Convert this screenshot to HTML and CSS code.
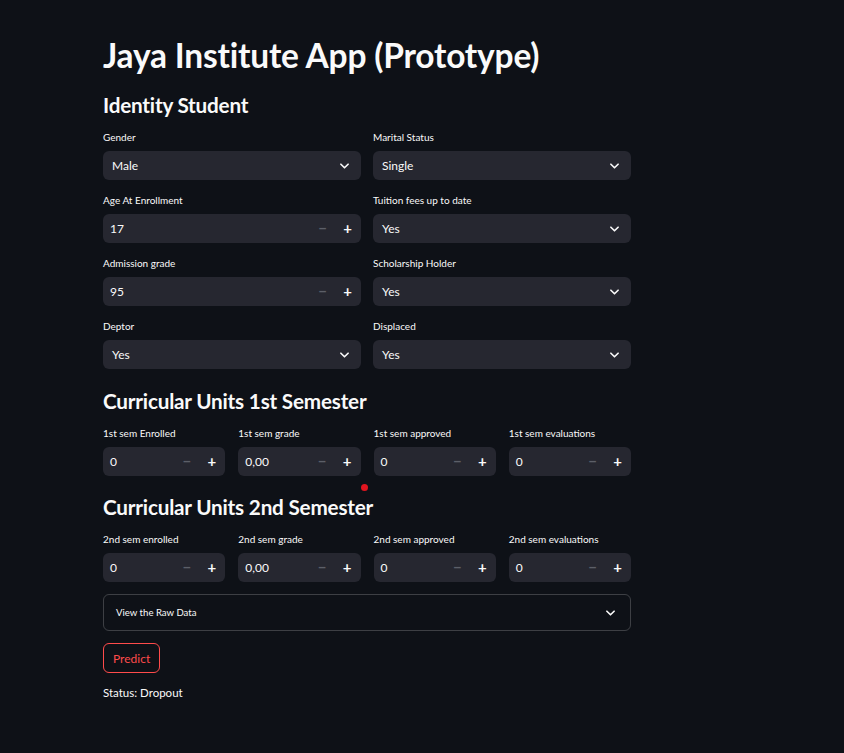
FILE: index.html
```html
<!DOCTYPE html>
<html lang="en">
<head>
<meta charset="utf-8">
<title>Jaya Institute App</title>
<link rel="stylesheet" href="styles.css">
</head>
<body>
<main class="main">
  <h1 class="title">Jaya Institute App (Prototype)</h1>
  <h3 class="subheader">Identity Student</h3>
  <div class="grid2">
    <div class="field"><label class="lbl">Gender</label><div class="select"><span>Male</span><svg class="chev" viewBox="0 0 10 6"><path d="M1 1l4 4 4-4" /></svg></div></div>
    <div class="field"><label class="lbl">Marital Status</label><div class="select"><span>Single</span><svg class="chev" viewBox="0 0 10 6"><path d="M1 1l4 4 4-4" /></svg></div></div>
    <div class="field"><label class="lbl">Age At Enrollment</label><div class="num"><span class="val">17</span><span class="minus">−</span><span class="plus">+</span></div></div>
    <div class="field"><label class="lbl">Tuition fees up to date</label><div class="select"><span>Yes</span><svg class="chev" viewBox="0 0 10 6"><path d="M1 1l4 4 4-4" /></svg></div></div>
    <div class="field"><label class="lbl">Admission grade</label><div class="num"><span class="val">95</span><span class="minus">−</span><span class="plus">+</span></div></div>
    <div class="field"><label class="lbl">Scholarship Holder</label><div class="select"><span>Yes</span><svg class="chev" viewBox="0 0 10 6"><path d="M1 1l4 4 4-4" /></svg></div></div>
    <div class="field"><label class="lbl">Deptor</label><div class="select"><span>Yes</span><svg class="chev" viewBox="0 0 10 6"><path d="M1 1l4 4 4-4" /></svg></div></div>
    <div class="field"><label class="lbl">Displaced</label><div class="select"><span>Yes</span><svg class="chev" viewBox="0 0 10 6"><path d="M1 1l4 4 4-4" /></svg></div></div>
  </div>

  <h3 class="subheader sec">Curricular Units 1st Semester</h3>
  <div class="grid4">
    <div class="field"><label class="lbl">1st sem Enrolled</label><div class="num"><span class="val">0</span><span class="minus">−</span><span class="plus">+</span></div></div>
    <div class="field"><label class="lbl">1st sem grade</label><div class="num"><span class="val">0,00</span><span class="minus">−</span><span class="plus">+</span></div></div>
    <div class="field"><label class="lbl">1st sem approved</label><div class="num"><span class="val">0</span><span class="minus">−</span><span class="plus">+</span></div></div>
    <div class="field"><label class="lbl">1st sem evaluations</label><div class="num"><span class="val">0</span><span class="minus">−</span><span class="plus">+</span></div></div>
  </div>

  <div class="sec2">
    <span class="dot"></span>
    <h3 class="subheader">Curricular Units 2nd Semester</h3>
  </div>
  <div class="grid4">
    <div class="field"><label class="lbl">2nd sem enrolled</label><div class="num"><span class="val">0</span><span class="minus">−</span><span class="plus">+</span></div></div>
    <div class="field"><label class="lbl">2nd sem grade</label><div class="num"><span class="val">0,00</span><span class="minus">−</span><span class="plus">+</span></div></div>
    <div class="field"><label class="lbl">2nd sem approved</label><div class="num"><span class="val">0</span><span class="minus">−</span><span class="plus">+</span></div></div>
    <div class="field"><label class="lbl">2nd sem evaluations</label><div class="num"><span class="val">0</span><span class="minus">−</span><span class="plus">+</span></div></div>
  </div>

  <div class="expander"><span>View the Raw Data</span><svg class="chev" viewBox="0 0 10 6"><path d="M1 1l4 4 4-4" /></svg></div>
  <button class="btn">Predict</button>
  <p class="status">Status: Dropout</p>
</main>
</body>
</html>
```
FILE: styles.css
```css
* { box-sizing: border-box; }
html, body { margin: 0; padding: 0; }
body {
  background: #0e1117;
  color: #fafafa;
  font-family: "Lato", "Noto Sans", sans-serif;
  width: 844px;
  height: 753px;
  overflow: hidden;
}
.main {
  width: 528px;
  margin-left: 103px;
  padding-top: 35px;
  display: flex;
  flex-direction: column;
}
.title {
  margin: 0;
  font-size: 33.5px;
  font-weight: 700;
  line-height: 40px;
  letter-spacing: -0.2px;
}
.subheader {
  margin: 0;
  font-size: 20.7px;
  font-weight: 700;
  line-height: 26px;
  letter-spacing: -0.2px;
}
.title + .subheader { margin-top: 17px; }
.grid2 {
  margin-top: 13px;
  display: grid;
  grid-template-columns: 1fr 1fr;
  column-gap: 12px;
  row-gap: 14px;
}
.grid4 {
  margin-top: 13px;
  display: grid;
  grid-template-columns: repeat(4, 1fr);
  column-gap: 13px;
}
.field { display: flex; flex-direction: column; }
.lbl {
  font-size: 10px;
  line-height: 13px;
  height: 13px;
  margin-bottom: 7px;
  color: #fafafa;
}
.select, .num {
  height: 29px;
  background: #262730;
  border-radius: 6px;
  display: flex;
  align-items: center;
  font-size: 12px;
}
.select { padding: 0 12px 0 9px; justify-content: space-between; }
.num { padding-left: 7px; }
.val { flex: 1; }
.minus, .plus {
  width: 25px;
  text-align: center;
  font-size: 15px;
  font-weight: 700;
  line-height: 29px;
}
.minus { color: #5c5f68; }
.plus { color: #fafafa; margin-right: 1px; }
.chev {
  width: 9px;
  height: 6px;
  fill: none;
  stroke: #fafafa;
  stroke-width: 1.8;
  stroke-linecap: round;
  stroke-linejoin: round;
}
.sec { margin-top: 19px; }
.sec2 { position: relative; margin-top: 18px; }
.dot {
  position: absolute;
  left: 258px;
  top: -10px;
  width: 7px;
  height: 7px;
  border-radius: 50%;
  background: #e0151f;
}
.expander {
  margin-top: 12px;
  height: 37px;
  border: 1px solid rgba(250, 250, 250, 0.2);
  border-radius: 6px;
  display: flex;
  align-items: center;
  justify-content: space-between;
  padding: 0 15px 0 12px;
  font-size: 9.6px;
}
.btn {
  align-self: flex-start;
  margin-top: 12px;
  height: 30px;
  padding: 0 9px;
  background: transparent;
  border: 1px solid #ff4b4b;
  border-radius: 6px;
  color: #ff4b4b;
  font-family: inherit;
  font-size: 12px;
}
.status {
  margin: 12px 0 0;
  font-size: 11.5px;
  line-height: 15px;
}
```
